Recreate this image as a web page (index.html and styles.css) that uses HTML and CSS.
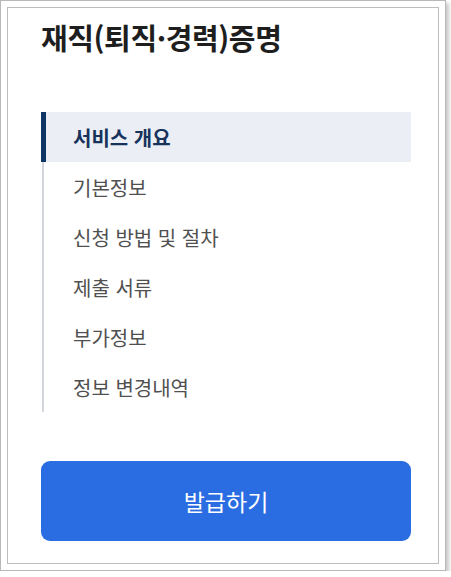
FILE: index.html
```html
<!DOCTYPE html>
<html lang="ko">
<head>
<meta charset="utf-8">
<link rel="stylesheet" href="styles.css">
</head>
<body>
<div class="frame">
  <div class="panel">
    <h1 class="title">재직(퇴직·경력)증명</h1>
    <nav class="menu">
      <a class="item active">서비스 개요</a>
      <a class="item">기본정보</a>
      <a class="item">신청 방법 및 절차</a>
      <a class="item">제출 서류</a>
      <a class="item">부가정보</a>
      <a class="item">정보 변경내역</a>
    </nav>
    <button class="issue">발급하기</button>
  </div>
</div>
</body>
</html>
```
FILE: styles.css
```css
html, body {
  margin: 0;
  padding: 0;
  background: #fff;
}
body {
  font-family: "Noto Sans CJK KR", "Noto Sans", sans-serif;
}
.frame {
  width: 446px;
  height: 571px;
  box-sizing: border-box;
  border: 1px solid #b8b8b8;
  padding: 6px;
  box-shadow: 3px 3px 4px rgba(0, 0, 0, 0.22);
  background: #fff;
}
.panel {
  width: 432px;
  height: 557px;
  box-sizing: border-box;
  border: 1px solid #bdbdbd;
  padding: 9px 27px 0 33px;
  display: flex;
  flex-direction: column;
}
.title {
  margin: 0;
  font-size: 29px;
  line-height: 40px;
  font-weight: 700;
  color: #1e1e1e;
  letter-spacing: -0.4px;
}
.menu {
  margin-top: 55px;
  display: flex;
  flex-direction: column;
}
.item {
  height: 50px;
  display: flex;
  align-items: center;
  margin-left: 1px;
  border-left: 2px solid #d3d7dd;
  padding-left: 29px;
  font-size: 20px;
  color: #505050;
}
.item.active {
  margin-left: 0;
  border-left: 5px solid #0f3566;
  padding-left: 27px;
  background: #ebeff5;
  color: #17335c;
  font-weight: 700;
}
.issue {
  margin-top: 49px;
  height: 80px;
  border: 0;
  border-radius: 9px;
  background: #2a6ce2;
  color: #fff;
  font-family: "Noto Sans CJK KR", "Noto Sans", sans-serif;
  font-size: 23px;
  font-weight: 400;
}
```
